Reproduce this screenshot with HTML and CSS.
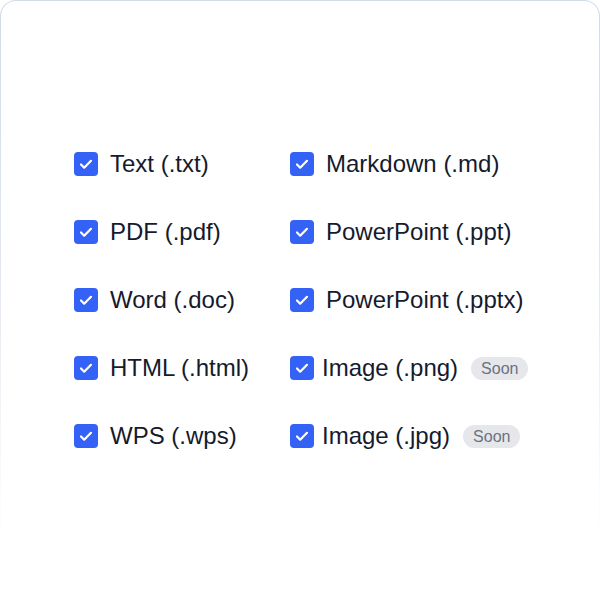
FILE: index.html
```html
<!DOCTYPE html>
<html lang="en">
<head>
    <meta charset="UTF-8">
    <meta name="viewport" content="width=device-width, initial-scale=1.0">
    <title>Export Formats</title>
    <link rel="stylesheet" href="styles.css">
</head>
<body>
    <div class="card">
        <div class="formats">
            <div class="option"><span class="check"><svg viewBox="0 0 24 24"><path d="M7 12.5l3.2 3.2L17 8.8"/></svg></span><span class="label">Text (.txt)</span></div>
            <div class="option"><span class="check"><svg viewBox="0 0 24 24"><path d="M7 12.5l3.2 3.2L17 8.8"/></svg></span><span class="label">Markdown (.md)</span></div>
            <div class="option"><span class="check"><svg viewBox="0 0 24 24"><path d="M7 12.5l3.2 3.2L17 8.8"/></svg></span><span class="label">PDF (.pdf)</span></div>
            <div class="option"><span class="check"><svg viewBox="0 0 24 24"><path d="M7 12.5l3.2 3.2L17 8.8"/></svg></span><span class="label">PowerPoint (.ppt)</span></div>
            <div class="option"><span class="check"><svg viewBox="0 0 24 24"><path d="M7 12.5l3.2 3.2L17 8.8"/></svg></span><span class="label">Word (.doc)</span></div>
            <div class="option"><span class="check"><svg viewBox="0 0 24 24"><path d="M7 12.5l3.2 3.2L17 8.8"/></svg></span><span class="label">PowerPoint (.pptx)</span></div>
            <div class="option"><span class="check"><svg viewBox="0 0 24 24"><path d="M7 12.5l3.2 3.2L17 8.8"/></svg></span><span class="label">HTML (.html)</span></div>
            <div class="option tight"><span class="check"><svg viewBox="0 0 24 24"><path d="M7 12.5l3.2 3.2L17 8.8"/></svg></span><span class="label">Image (.png)</span><span class="badge">Soon</span></div>
            <div class="option"><span class="check"><svg viewBox="0 0 24 24"><path d="M7 12.5l3.2 3.2L17 8.8"/></svg></span><span class="label">WPS (.wps)</span></div>
            <div class="option tight"><span class="check"><svg viewBox="0 0 24 24"><path d="M7 12.5l3.2 3.2L17 8.8"/></svg></span><span class="label">Image (.jpg)</span><span class="badge">Soon</span></div>
        </div>
    </div>
</body>
</html>
```

FILE: styles.css
```css
body {
    margin: 0;
    font-family: "Liberation Sans", Arial, sans-serif;
    background: #ffffff;
}
.card {
    box-sizing: border-box;
    width: 600px;
    height: 600px;
    border: 1px solid transparent;
    border-radius: 16px;
    background: linear-gradient(#ffffff, #ffffff) padding-box,
                linear-gradient(to bottom, #d3dbe7 0%, #e3e8ef 45%, rgba(255, 255, 255, 0) 90%) border-box;
    padding: 151px 0 0 73px;
}
.formats {
    display: grid;
    grid-template-columns: 216px auto;
    row-gap: 44px;
}
.option {
    display: flex;
    align-items: center;
    gap: 12px;
    height: 24px;
}
.option.tight {
    gap: 8px;
}
.check {
    width: 24px;
    height: 24px;
    border-radius: 4px;
    background: #3461f6;
    display: flex;
    align-items: center;
    justify-content: center;
    flex-shrink: 0;
}
.check svg {
    width: 24px;
    height: 24px;
    fill: none;
    stroke: #ffffff;
    stroke-width: 2.2;
    stroke-linecap: round;
    stroke-linejoin: round;
}
.label {
    font-size: 24px;
    color: #151a2d;
    white-space: nowrap;
}
.badge {
    margin-left: 5px;
    background: #e6e7eb;
    color: #6b7280;
    font-size: 16px;
    line-height: 23px;
    padding: 0 10px;
    border-radius: 12px;
}
```
